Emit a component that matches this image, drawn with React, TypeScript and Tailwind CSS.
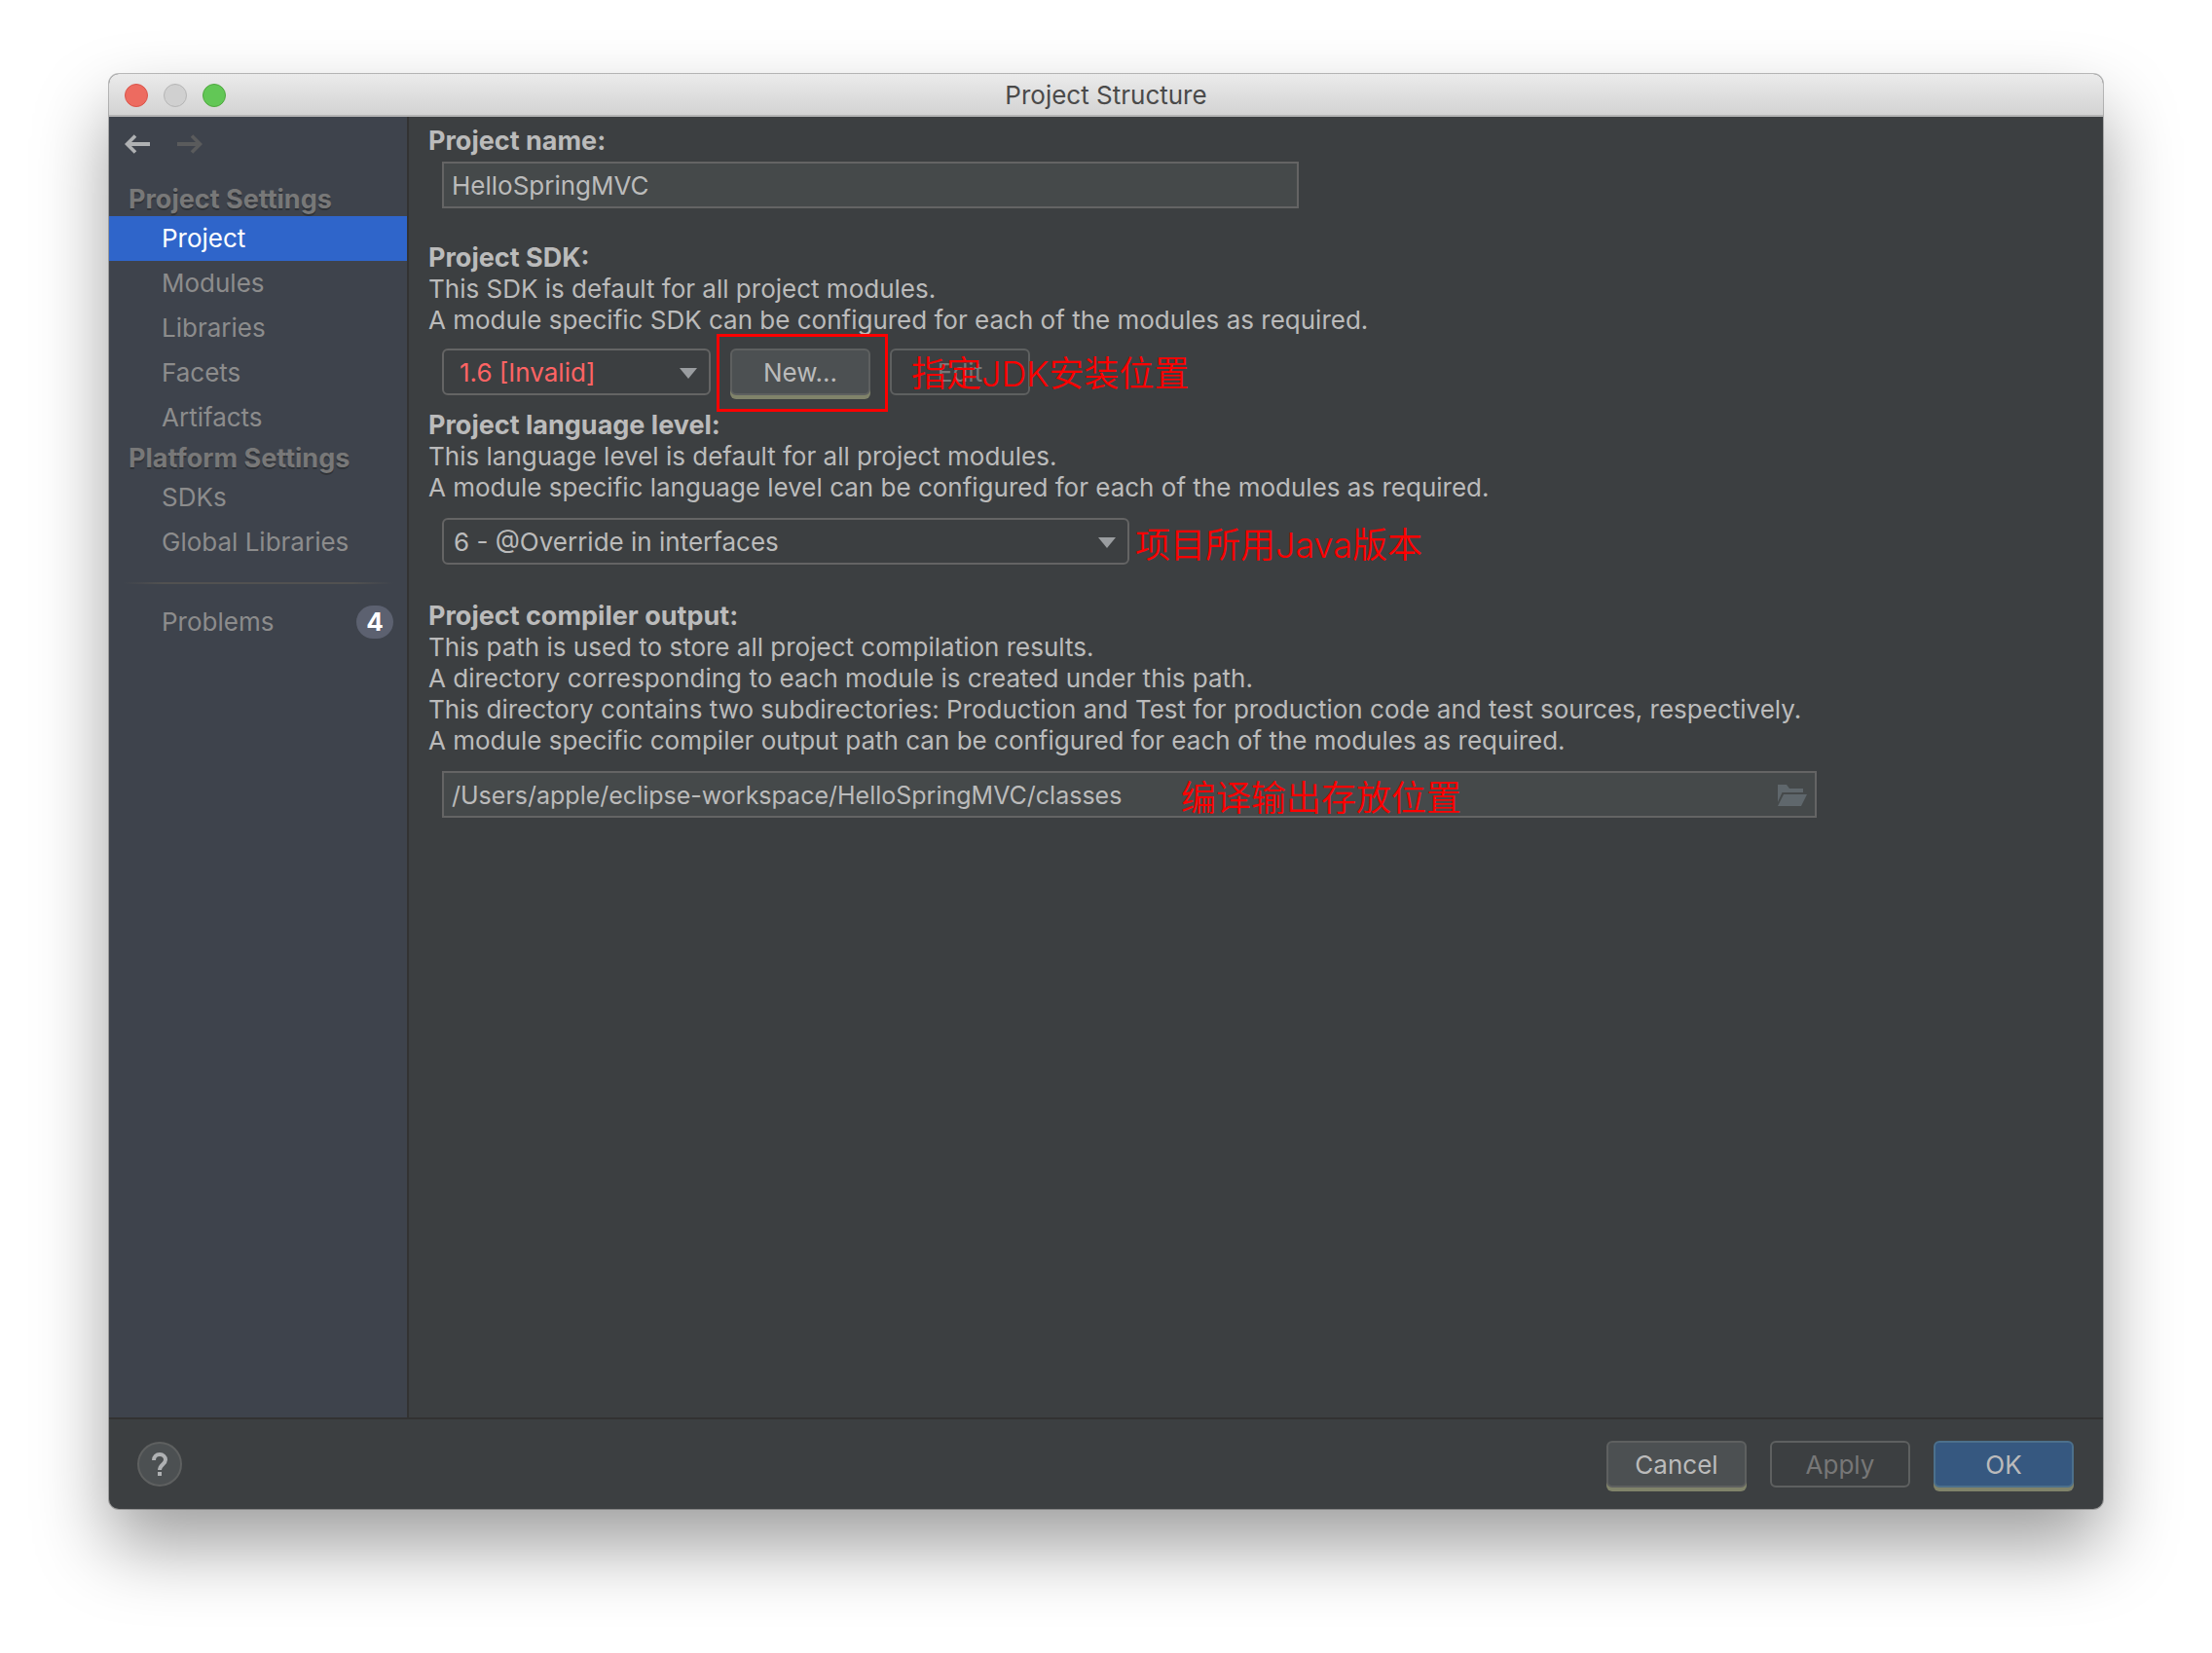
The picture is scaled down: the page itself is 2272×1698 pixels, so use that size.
import type { ReactNode } from 'react';
import clsx from 'clsx';

type NavItem = { label: string; active?: boolean; count?: number };

const PROJECT_ITEMS: NavItem[] = [
  { label: 'Project', active: true },
  { label: 'Modules' },
  { label: 'Libraries' },
  { label: 'Facets' },
  { label: 'Artifacts' },
];

const PLATFORM_ITEMS: NavItem[] = [{ label: 'SDKs' }, { label: 'Global Libraries' }];

const BUTTON_STYLES: Record<'normal' | 'primary' | 'disabled', string> = {
  normal: 'border-[#5e6060] bg-[#4c5052] text-[#bbbbbb] shadow-[0_4px_0_#80836a]',
  primary: 'border-[#4c708c] bg-[#365880] text-[#bbbbbb] shadow-[0_4px_0_#80836a]',
  disabled: 'border-[#5e6060] bg-transparent text-[#777777]',
};

function Button({ variant = 'normal', children }: { variant?: keyof typeof BUTTON_STYLES; children: ReactNode }) {
  return (
    <button
      type="button"
      disabled={variant === 'disabled'}
      className={clsx('h-12 w-36 rounded-md border-2 pt-px text-center', BUTTON_STYLES[variant])}
    >
      {children}
    </button>
  );
}

function NavList({ items }: { items: NavItem[] }) {
  return (
    <ul>
      {items.map((item) => (
        <li key={item.label}>
          <a
            href="#"
            aria-current={item.active ? 'page' : undefined}
            className={clsx(
              'flex h-[46px] items-center justify-between pr-[14px] pl-[54px]',
              item.active ? 'bg-[#2f65ca] text-white' : 'text-[#8c8c8c]',
            )}
          >
            {item.label}
            {item.count !== undefined && (
              <span className="flex h-[34px] w-[38px] items-center justify-center rounded-full bg-[#5c6170] font-bold text-white">
                {item.count}
              </span>
            )}
          </a>
        </li>
      ))}
    </ul>
  );
}

function NavHeading({ children }: { children: ReactNode }) {
  return (
    <h2 className="flex h-9 items-center pt-[2px] pl-5 text-[27px] font-bold text-[#787878] [text-shadow:0_2px_0_#2f3237]">
      {children}
    </h2>
  );
}

function Sidebar() {
  return (
    <nav className="w-[308px] shrink-0 border-r-2 border-[#323232] bg-[#3e434c]">
      <div className="flex h-[66px] items-center gap-7 px-4 pb-[10px]">
        <button type="button" aria-label="Back" className="text-[#afb1b3]">
          <ArrowIcon />
        </button>
        <button type="button" aria-label="Forward" disabled className="rotate-180 text-[#5a5b5c]">
          <ArrowIcon />
        </button>
      </div>
      <NavHeading>Project Settings</NavHeading>
      <NavList items={PROJECT_ITEMS} />
      <NavHeading>Platform Settings</NavHeading>
      <NavList items={PLATFORM_ITEMS} />
      <div className="flex h-9 items-center px-[14px] pt-[2px]">
        <div className="h-[2px] w-full bg-[linear-gradient(to_right,transparent,#515151_15%,#515151_85%,transparent)]" />
      </div>
      <NavList items={[{ label: 'Problems', count: 4 }]} />
    </nav>
  );
}

function ArrowIcon() {
  return (
    <svg width="26" height="20" viewBox="0 0 26 20" fill="none" stroke="currentColor" aria-hidden>
      <path d="M26 10H3" strokeWidth="4" />
      <path d="M11 1.5L2.5 10L11 18.5" strokeWidth="3.6" />
    </svg>
  );
}

function FolderIcon() {
  return (
    <svg width="30" height="22" viewBox="0 0 30 22" fill="#5f676c" aria-hidden>
      <path d="M0 0H9L12 4H26V8H4.5L0 18Z" />
      <path d="M6 10H30L24 22H0Z" />
    </svg>
  );
}

type SelectProps = { id: string; value: string; className: string };

function Select({ id, value, className }: SelectProps) {
  return (
    <div className="relative">
      <select
        id={id}
        defaultValue={value}
        className={clsx('h-12 appearance-none rounded-md border-2 border-[#646464] bg-[#3c3f41] pt-px', className)}
      >
        <option>{value}</option>
      </select>
      <svg
        className="pointer-events-none absolute top-5 right-[14px]"
        width="18"
        height="11"
        viewBox="0 0 18 11"
        fill="#9a9da0"
        aria-hidden
      >
        <path d="M0 0H18L9 11Z" />
      </svg>
    </div>
  );
}

function Note({ className, children }: { className?: string; children: ReactNode }) {
  return (
    <span
      className={clsx(
        "pointer-events-none font-[Inter,'Noto_Sans_CJK_SC',sans-serif] text-[36px] leading-9 font-[350] whitespace-nowrap text-[#ff0000]",
        className,
      )}
    >
      {children}
    </span>
  );
}

function FieldLabel({ htmlFor, children }: { htmlFor: string; children: ReactNode }) {
  return (
    <label htmlFor={htmlFor} className="block text-[27px] leading-8 font-bold">
      {children}
    </label>
  );
}

function ProjectForm() {
  return (
    <main className="min-w-0 flex-1 pt-[9px] pl-5 text-[#bbbbbb]">
      <section>
        <FieldLabel htmlFor="name">Project name:</FieldLabel>
        <input
          id="name"
          defaultValue="HelloSpringMVC"
          className="mt-[5px] ml-[14px] block h-12 w-[880px] border-2 border-[#646464] bg-[#45494a] px-2 pt-px"
        />
      </section>

      <section className="mt-[35px]">
        <FieldLabel htmlFor="sdk">Project SDK:</FieldLabel>
        <p>This SDK is default for all project modules.</p>
        <p>A module specific SDK can be configured for each of the modules as required.</p>
        <div className="mt-[13px] ml-[14px] flex gap-5">
          <Select id="sdk" value="1.6 [Invalid]" className="w-[276px] pl-4 text-[#ff6464]" />
          <div className="relative">
            <Button>New...</Button>
            <div className="pointer-events-none absolute -top-[15px] -right-[18px] -bottom-[17px] -left-[14px] border-[3px] border-[#ff0000]" />
          </div>
          <div className="relative">
            <Button variant="disabled">Edit</Button>
            <Note className="absolute top-2 left-[22px]">指定JDK安装位置</Note>
          </div>
        </div>
      </section>

      <section className="mt-[15px]">
        <FieldLabel htmlFor="level">Project language level:</FieldLabel>
        <p>This language level is default for all project modules.</p>
        <p>A module specific language level can be configured for each of the modules as required.</p>
        <div className="mt-[15px] ml-[14px] flex items-center gap-[6px]">
          <Select id="level" value="6 - @Override in interfaces" className="w-[706px] pl-[10px]" />
          <Note className="pt-2">项目所用Java版本</Note>
        </div>
      </section>

      <section className="mt-[37px]">
        <FieldLabel htmlFor="output">Project compiler output:</FieldLabel>
        <p>This path is used to store all project compilation results.</p>
        <p>A directory corresponding to each module is created under this path.</p>
        <p>
          This directory contains two subdirectories: Production and Test for production code and test sources,
          respectively.
        </p>
        <p>A module specific compiler output path can be configured for each of the modules as required.</p>
        <div className="relative mt-[15px] ml-[14px] flex h-12 w-[1412px] items-center border-2 border-[#646464] bg-[#45494a] px-2 pt-px">
          <input
            id="output"
            defaultValue="/Users/apple/eclipse-workspace/HelloSpringMVC/classes"
            className="min-w-0 flex-1 bg-transparent text-[25px]"
          />
          <button type="button" aria-label="Browse">
            <FolderIcon />
          </button>
          <Note className="absolute top-2 left-[757px]">编译输出存放位置</Note>
        </div>
      </section>
    </main>
  );
}

export default function App() {
  return (
    <div className="flex min-h-screen flex-col bg-white px-28 pt-[76px] pb-[148px] font-[Inter,sans-serif] text-[26px] leading-8">
      <div className="flex flex-1 flex-col overflow-hidden rounded-[10px] bg-[#3c3f41] shadow-[0_0_0_1px_rgba(0,0,0,0.25),0_38px_76px_rgba(0,0,0,0.38)]">
        <header className="grid h-11 grid-cols-[1fr_auto_1fr] items-center border-b-2 border-[#b4b4b4] bg-linear-to-b from-[#ebebeb] to-[#d3d3d3] px-4 pt-[2px]">
          <div className="flex gap-4">
            <button type="button" aria-label="Close" className="size-6 rounded-full border border-[#d9544a] bg-[#ed6b60]" />
            <button type="button" aria-label="Minimize" className="size-6 rounded-full border border-[#b5b5b5] bg-[#d0d0d0]" />
            <button type="button" aria-label="Zoom" className="size-6 rounded-full border border-[#4fa73f] bg-[#62c756]" />
          </div>
          <h1 className="text-[#4a4a4a]">Project Structure</h1>
        </header>

        <div className="flex flex-1">
          <Sidebar />
          <ProjectForm />
        </div>

        <footer className="flex h-[94px] items-start gap-6 border-t-2 border-[#323232] pt-[22px] pr-[30px] pl-[29px]">
          <button
            type="button"
            aria-label="Help"
            className="mt-px mr-auto flex size-[46px] items-center justify-center rounded-full border-2 border-[#5e6060] bg-[#4c5052] text-[#afb1b3]"
          >
            <svg width="16" height="24" viewBox="0 0 16 24" fill="none" stroke="currentColor" aria-hidden>
              <path d="M2 8C2 4.5 4.5 2 8 2S14 4.5 14 7.5C14 12 8 12.5 8 18" strokeWidth="4" />
              <path d="M8 20V24" strokeWidth="4" />
            </svg>
          </button>
          <Button>Cancel</Button>
          <Button variant="disabled">Apply</Button>
          <Button variant="primary">OK</Button>
        </footer>
      </div>
    </div>
  );
}
